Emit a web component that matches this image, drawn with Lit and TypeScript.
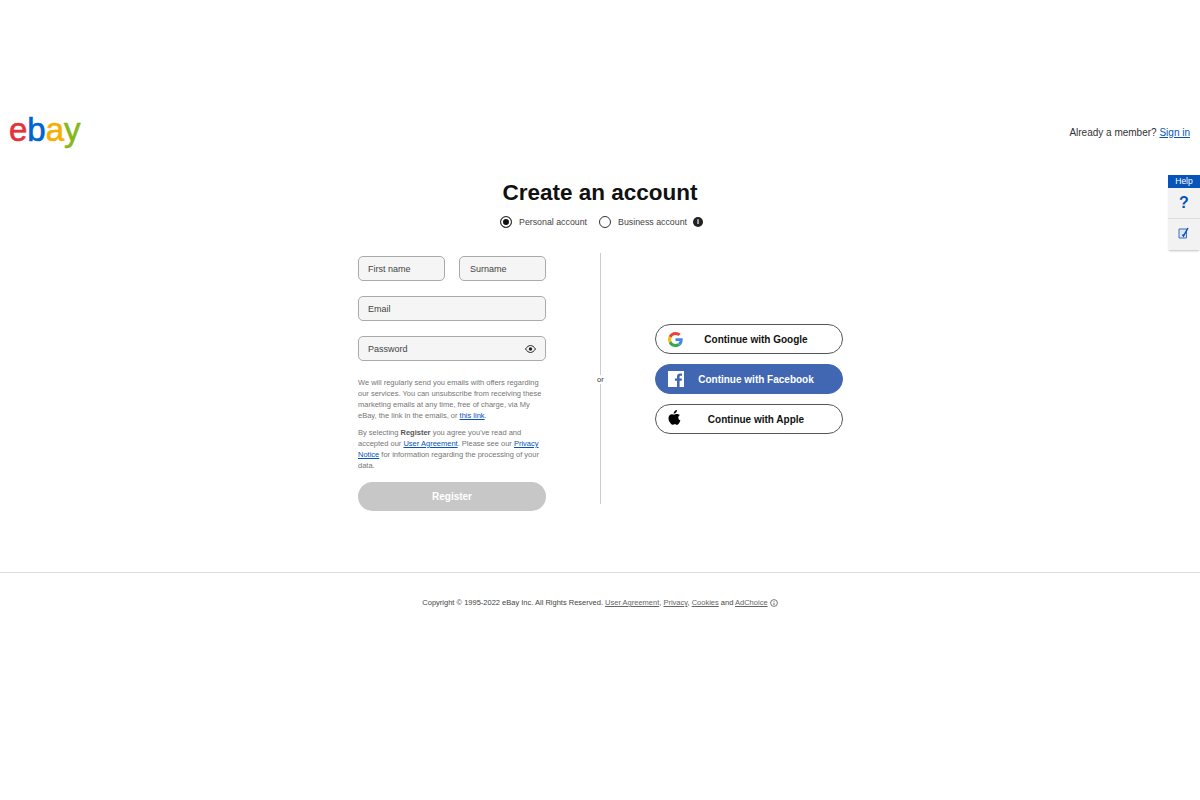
import { LitElement, css, html } from "lit";
import { customElement } from "lit/decorators.js";

@customElement("app-root")
export class AppRoot extends LitElement {
  static styles = css`
    :host {
      display: block;
      position: relative;
      min-height: 800px;
      background: #fff;
      font-family: "Liberation Sans", Arial, sans-serif;
      color: #111;
    }

    a {
      color: #0654ba;
    }

    .header {
      display: flex;
      align-items: center;
      justify-content: space-between;
      height: 40px;
      padding: 112px 10px 0 9px;
    }

    .logo {
      display: flex;
      padding-bottom: 4px;
      font-size: 33px;
      line-height: 36px;
      -webkit-text-stroke: 0.6px currentColor;
    }
    .logo .e { color: #e53238; }
    .logo .b { color: #0064d2; }
    .logo .a { color: #f5af02; }
    .logo .y { color: #86b817; }

    .member {
      font-size: 10px;
      color: #333;
    }

    .title {
      margin: 27px 0 0;
      text-align: center;
      font-size: 22.5px;
      line-height: 28px;
      font-weight: 700;
    }

    .account-type {
      display: flex;
      justify-content: center;
      align-items: center;
      height: 16px;
      margin-top: 7px;
      padding-left: 3px;
      font-size: 8.8px;
      color: #444;
    }

    .radio {
      box-sizing: border-box;
      width: 12px;
      height: 12px;
      margin-right: 7px;
      border: 1px solid #333;
      border-radius: 50%;
    }
    .radio.on {
      background: #111;
      box-shadow: inset 0 0 0 2px #fff;
    }

    .business {
      margin-left: 12px;
    }

    .info {
      display: flex;
      align-items: center;
      justify-content: center;
      width: 10px;
      height: 10px;
      margin-left: 6px;
      border-radius: 50%;
      background: #222;
      color: #fff;
      font-size: 7px;
      font-weight: 700;
      line-height: 10px;
    }

    .columns {
      display: grid;
      grid-template-columns: 188px 1fr 188px;
      width: 485px;
      margin: 23px 0 0 calc(50% - 242px);
    }

    .form {
      display: flex;
      flex-direction: column;
      gap: 15px;
      padding-top: 3px;
    }

    .names {
      display: grid;
      grid-template-columns: 87px 87px;
      justify-content: space-between;
    }

    .field {
      box-sizing: border-box;
      display: flex;
      align-items: center;
      justify-content: space-between;
      height: 25px;
      padding: 0 9px;
      border: 1px solid #aaa;
      border-radius: 5px;
      background: #f5f5f5;
      font-size: 9px;
      color: #444;
    }
    .names .field + .field {
      padding-left: 10px;
    }

    .legal {
      margin-top: 1px;
      font-size: 7.5px;
      line-height: 11px;
      color: #767676;
    }
    .legal p {
      margin: 0 0 6px;
    }
    .legal b {
      color: #555;
    }

    .register {
      height: 29px;
      margin-top: -10px;
      border: 0;
      border-radius: 15px;
      background: #c7c7c7;
      color: #fff;
      font: 700 10px "Liberation Sans", Arial, sans-serif;
    }

    .divider {
      position: relative;
      justify-self: center;
      width: 1px;
      height: 251px;
      background: #ccc;
    }
    .or {
      position: absolute;
      top: 122px;
      left: -4px;
      padding: 0 1px;
      background: #fff;
      font-size: 7.5px;
      line-height: 9px;
      color: #333;
    }

    .social {
      display: flex;
      flex-direction: column;
      gap: 10px;
      padding-top: 71px;
    }

    .btn {
      box-sizing: border-box;
      position: relative;
      display: flex;
      align-items: center;
      justify-content: center;
      height: 30px;
      padding-left: 14px;
      border: 1.5px solid #555;
      border-radius: 15px;
      background: #fff;
      font-size: 10px;
      font-weight: 700;
      color: #111;
    }
    .btn.fb {
      border-color: #4267b2;
      background: #4267b2;
      color: #fff;
    }
    .btn svg {
      position: absolute;
      left: 12px;
    }
    .btn .apple {
      top: 5px;
    }

    .footer {
      margin-top: 61px;
      padding-top: 25px;
      border-top: 1px solid #ddd;
      text-align: center;
      font-size: 7.5px;
      line-height: 10px;
      color: #444;
    }
    .footer a {
      color: #666;
    }
    .footer svg {
      vertical-align: -1.5px;
    }

    .help {
      position: absolute;
      top: 175px;
      right: 0;
      width: 32px;
      box-shadow: 0 2px 2px -1px rgba(0, 0, 0, 0.25);
    }
    .help-head {
      height: 13px;
      background: #0654ba;
      color: #fff;
      font-size: 8.5px;
      line-height: 13px;
      text-align: center;
    }
    .help-item {
      display: flex;
      align-items: center;
      justify-content: center;
      height: 30px;
      background: #f2f2f2;
      color: #0654ba;
      font-size: 16px;
      font-weight: 700;
    }
    .help-item + .help-item {
      box-sizing: border-box;
      height: 32px;
      padding-bottom: 3px;
      border-top: 1px solid #ddd;
    }
  `;

  render() {
    return html`
      <header class="header">
        <div class="logo">
          <span class="e">e</span><span class="b">b</span><span class="a">a</span><span class="y">y</span>
        </div>
        <div class="member">Already a member? <a href="#">Sign in</a></div>
      </header>

      <h1 class="title">Create an account</h1>
      <div class="account-type">
        <span class="radio on"></span>
        <span>Personal account</span>
        <span class="radio business"></span>
        <span>Business account</span>
        <span class="info">i</span>
      </div>

      <div class="columns">
        <div class="form">
          <div class="names">
            <div class="field">First name</div>
            <div class="field">Surname</div>
          </div>
          <div class="field">Email</div>
          <div class="field">
            Password
            <svg width="11" height="8" viewBox="0 0 22 16">
              <path d="M1 8c3-4.500 6.500-7 10-7s7 2.500 10 7c-3 4.500-6.500 7-10 7S4 12.500 1 8z" fill="none" stroke="#222" stroke-width="2" />
              <circle cx="11" cy="8" r="3.500" fill="#222" />
            </svg>
          </div>
          <div class="legal">
            <p>
              We will regularly send you emails with offers regarding our services. You can unsubscribe from
              receiving these marketing emails at any time, free of charge, via My eBay, the link in the emails, or
              <a href="#">this link</a>.
            </p>
            <p>
              By selecting <b>Register</b> you agree you've read and accepted our <a href="#">User Agreement</a>.
              Please see our <a href="#">Privacy Notice</a> for information regarding the processing of your data.
            </p>
          </div>
          <button class="register">Register</button>
        </div>

        <div class="divider"><span class="or">or</span></div>

        <div class="social">
          <div class="btn">
            <svg width="15" height="15" viewBox="0 0 48 48">
              <path fill="#ea4335" d="M24 9.500c3.500 0 6.700 1.300 9.200 3.500l6.900-6.900C35.900 2.400 30.300 0 24 0 14.600 0 6.500 5.400 2.600 13.200l8 6.200C12.500 13.600 17.800 9.500 24 9.500z" />
              <path fill="#4285f4" d="M47 24.500c0-1.600-.1-3.100-.4-4.500H24v9h13c-.6 3-2.300 5.500-4.800 7.200l7.700 6C44.400 38 47 31.800 47 24.500z" />
              <path fill="#fbbc05" d="M10.600 28.600c-.5-1.400-.8-3-.8-4.600s.3-3.200.8-4.600l-8-6.200C.9 16.500 0 20.100 0 24s.9 7.500 2.600 10.800l8-6.200z" />
              <path fill="#34a853" d="M24 48c6.500 0 11.900-2.100 15.900-5.800l-7.700-6c-2.200 1.400-4.900 2.300-8.200 2.300-6.200 0-11.500-4.100-13.400-9.900l-8 6.200C6.500 42.600 14.600 48 24 48z" />
            </svg>
            Continue with Google
          </div>
          <div class="btn fb">
            <svg width="16" height="16" viewBox="0 0 16 16">
              <path fill="#fff" d="M0 0h16v16h-4.400V9.800h2.100l.3-2.400h-2.400V5.900c0-.7.2-1.200 1.200-1.200H14V2.500c-.2 0-1-.1-1.900-.1-1.900 0-3.100 1.100-3.100 3.200v1.800H6.900v2.400H9V16H0z" />
            </svg>
            Continue with Facebook
          </div>
          <div class="btn">
            <svg class="apple" width="13" height="15" viewBox="0 0 24 28">
              <path fill="#000" d="M16.500 0c.2 2-.6 3.500-1.600 4.700-1.100 1.300-2.700 2.200-4.300 2.100-.2-1.800.7-3.500 1.600-4.600C13.300 1 15 .1 16.500 0zM22 9.500c-1.700 1.100-2.800 2.800-2.800 4.900 0 2.400 1.500 4.400 3.800 5.300-.6 1.700-1.400 3.300-2.500 4.800-1 1.400-2.200 3-3.900 3-1.600 0-2.100-1-4.100-1-2 0-2.600 1-4.100 1-1.700 0-2.900-1.600-4-3.200C2 21.800.8 18.500.8 15.400c0-5 3.200-7.700 6.400-7.700 1.700 0 3.100 1.100 4.200 1.100 1 0 2.600-1.200 4.600-1.200 1.500 0 4.100.4 6 1.900z" />
            </svg>
            Continue with Apple
          </div>
        </div>
      </div>

      <footer class="footer">
        Copyright © 1995-2022 eBay Inc. All Rights Reserved. <a href="#">User Agreement</a>, <a href="#">Privacy</a>,
        <a href="#">Cookies</a> and <a href="#">AdChoice</a>
        <svg width="8" height="8" viewBox="0 0 16 16">
          <circle cx="8" cy="8" r="6.800" fill="none" stroke="#555" stroke-width="1.600" />
          <path d="M8 4.500v1.500M8 7.500v4.500" stroke="#555" stroke-width="1.800" />
        </svg>
      </footer>

      <aside class="help">
        <div class="help-head">Help</div>
        <div class="help-item">?</div>
        <div class="help-item">
          <svg width="12" height="12" viewBox="0 0 24 24">
            <path d="M2 4h15v18H2z" fill="#dbe6f5" stroke="#3a6fc0" stroke-width="2" />
            <path d="M9 15l2 3L20 2" fill="none" stroke="#0654ba" stroke-width="3" />
          </svg>
        </div>
      </aside>
    `;
  }
}
